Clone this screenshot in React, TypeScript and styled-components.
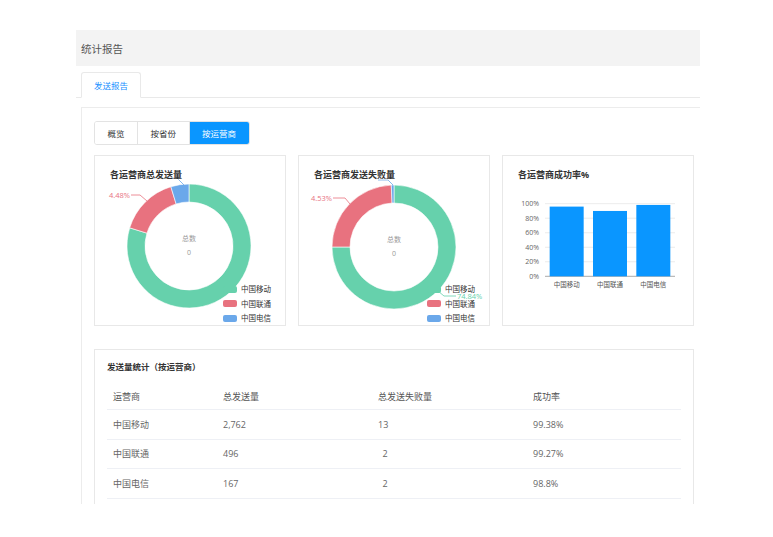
import React from "react";
import styled, { createGlobalStyle } from "styled-components";

const Global = createGlobalStyle`
  html, body { margin: 0; padding: 0; background: #fff; }
  body { font-family: "Open Sans", "Noto Sans CJK SC", sans-serif; color: #333; }
  * { box-sizing: border-box; }
`;

const GREEN = "#66d1ac";
const RED = "#e8727f";
const BLUE = "#6ba8ea";
const PRIMARY = "#0a96ff";

const Frame = styled.div`
  margin: 30px 0 0 76px;
  width: 624px;
  height: 474px;
  overflow: hidden;
`;

const PageHeader = styled.div`
  height: 36px;
  background: #f3f3f3;
  display: flex;
  align-items: center;
  padding-left: 5px;
  font-size: 10.5px;
  color: #555;
`;

const TabBar = styled.div`
  margin-top: 6px;
  height: 26px;
  border-bottom: 1px solid #e9e9e9;
  padding-left: 5px;
  display: flex;
  align-items: flex-end;
`;

const Tab = styled.div`
  width: 60px;
  height: 26px;
  margin-bottom: -1px;
  border: 1px solid #e9e9e9;
  border-bottom-color: #fff;
  border-radius: 3px 3px 0 0;
  background: #fff;
  color: #1890ff;
  font-size: 8.5px;
  display: flex;
  align-items: center;
  justify-content: center;
`;

const Panel = styled.div`
  margin: 9px 0 0 5px;
  width: 626px;
  border: 1px solid #ececec;
  padding: 12px 12px 30px;
`;

const ButtonGroup = styled.div`
  display: inline-flex;
  height: 24px;
  border: 1px solid #e3e3e3;
  border-radius: 3px;
  overflow: hidden;
`;

const Segment = styled.div<{ $active?: boolean }>`
  display: flex;
  align-items: center;
  padding: 0 12.5px;
  font-size: 8.5px;
  color: ${(p) => (p.$active ? "#fff" : "#333")};
  background: ${(p) => (p.$active ? PRIMARY : "#fff")};
  & + & { border-left: 1px solid #e3e3e3; }
`;

const ChartRow = styled.div`
  margin-top: 10px;
  display: grid;
  grid-template-columns: repeat(3, 1fr);
  gap: 12px;
`;

const Card = styled.div`
  position: relative;
  height: 171px;
  border: 1px solid #e8e8e8;
  background: #fff;
`;

const CardTitle = styled.div`
  position: relative;
  z-index: 1;
  padding: 13px 0 0 15px;
  height: 25px;
  font-size: 9px;
  line-height: 12px;
  font-weight: 700;
  color: #333;
  text-shadow: 0 0 2px #fff, 0 0 2px #fff;
`;

const ChartSvg = styled.svg`
  display: block;
  overflow: visible;
`;

const Legend = styled.div`
  position: absolute;
  left: 128px;
  top: 126px;
  display: flex;
  flex-direction: column;
`;

const LegendItem = styled.div`
  height: 14.5px;
  display: flex;
  align-items: center;
  gap: 3px;
`;

const LegendIcon = styled.span<{ $color: string }>`
  width: 14px;
  height: 7px;
  border-radius: 2px;
  background: ${(p) => p.$color};
`;

const LegendText = styled.span`
  font-size: 7.5px;
  line-height: 10px;
  color: #333;
  background: #fff;
  padding: 0 1px;
`;

const TableCard = styled.div`
  margin-top: 23px;
  border: 1px solid #e8e8e8;
  padding: 11px 12px 20px;
`;

const TableTitle = styled.div`
  font-size: 8.5px;
  line-height: 12px;
  font-weight: 700;
  color: #333;
`;

const Table = styled.div`
  margin-top: 11px;
  width: 574px;
`;

const Row = styled.div<{ $head?: boolean }>`
  display: grid;
  grid-template-columns: 110px 155px 155px 154px;
  height: ${(p) => (p.$head ? "26px" : "29.5px")};
  align-items: center;
  border-bottom: 1px solid #eef0f5;
  font-size: 9px;
  color: ${(p) => (p.$head ? "#555" : "#666")};
`;

const Cell = styled.div`
  padding-left: 6px;
  white-space: pre;
`;

type Seg = { color: string; a0: number; a1: number };

function pt(cx: number, cy: number, r: number, a: number) {
  const rad = (a * Math.PI) / 180;
  return [cx + r * Math.sin(rad), cy - r * Math.cos(rad)];
}

function arc(cx: number, cy: number, r0: number, r1: number, a0: number, a1: number) {
  const large = a1 - a0 > 180 ? 1 : 0;
  const [x1, y1] = pt(cx, cy, r1, a0);
  const [x2, y2] = pt(cx, cy, r1, a1);
  const [x3, y3] = pt(cx, cy, r0, a1);
  const [x4, y4] = pt(cx, cy, r0, a0);
  return `M${x1} ${y1} A${r1} ${r1} 0 ${large} 1 ${x2} ${y2} L${x3} ${y3} A${r0} ${r0} 0 ${large} 0 ${x4} ${y4} Z`;
}

type Label = { text: string; color: string; points: string; x: number; y: number; anchor: "start" | "end" };

const legendItems = [
  { name: "中国移动", color: GREEN },
  { name: "中国联通", color: RED },
  { name: "中国电信", color: BLUE },
];

function Donut({ title, cx, cy, segs, labels }: { title: string; cx: number; cy: number; segs: Seg[]; labels: Label[] }) {
  return (
    <Card>
      <CardTitle>{title}</CardTitle>
      <ChartSvg width={190} height={144}>
        {segs.map((s, i) => (
          <path key={i} d={arc(cx, cy, 44, 62, s.a0, s.a1)} fill={s.color} stroke="#fff" strokeWidth={0.6} />
        ))}
        {labels.map((l, i) => (
          <g key={i}>
            <polyline points={l.points} fill="none" stroke={l.color} strokeWidth={0.8} />
            {l.text && (
              <text x={l.x} y={l.y} fill={l.color} fontSize={7.5} textAnchor={l.anchor} dominantBaseline="central" fontFamily="Open Sans, sans-serif">
                {l.text}
              </text>
            )}
          </g>
        ))}
        <text x={cx} y={cy - 8} fill="#999" fontSize={7} textAnchor="middle" dominantBaseline="central" fontFamily="Noto Sans CJK SC, sans-serif">
          总数
        </text>
        <text x={cx} y={cy + 6} fill="#999" fontSize={7} textAnchor="middle" dominantBaseline="central" fontFamily="Open Sans, sans-serif">
          0
        </text>
      </ChartSvg>
      <Legend>
        {legendItems.map((it) => (
          <LegendItem key={it.name}>
            <LegendIcon $color={it.color} />
            <LegendText>{it.name}</LegendText>
          </LegendItem>
        ))}
      </Legend>
    </Card>
  );
}

const bars = [
  { name: "中国移动", value: 96 },
  { name: "中国联通", value: 90 },
  { name: "中国电信", value: 98.3 },
];

function BarChart() {
  const y0 = 95.3;
  const k = 0.726;
  const x0 = 42;
  const x1 = 172;
  const band = (x1 - x0) / 3;
  const ticks = [0, 20, 40, 60, 80, 100];
  return (
    <Card>
      <CardTitle>各运营商成功率%</CardTitle>
      <ChartSvg width={190} height={144}>
        {ticks.map((t) => (
          <g key={t}>
            <line x1={x0} x2={x1} y1={y0 - t * k} y2={y0 - t * k} stroke={t === 0 ? "#aaa" : "#e6e6e6"} strokeWidth={t === 0 ? 1 : 0.8} />
            <text x={36} y={y0 - t * k} fill="#666" fontSize={7} textAnchor="end" dominantBaseline="central" fontFamily="Open Sans, sans-serif">
              {t}%
            </text>
          </g>
        ))}
        {bars.map((b, i) => {
          const cx = x0 + band * (i + 0.5);
          const h = b.value * k;
          return (
            <g key={b.name}>
              <rect x={cx - 17} y={y0 - h} width={34} height={h} fill={PRIMARY} />
              <text x={cx} y={103} fill="#555" fontSize={6.5} textAnchor="middle" dominantBaseline="central" fontFamily="Noto Sans CJK SC, sans-serif">
                {b.name}
              </text>
            </g>
          );
        })}
      </ChartSvg>
    </Card>
  );
}

const rows = [
  { name: "中国移动", total: "2,762", fail: "13", rate: "99.38%" },
  { name: "中国联通", total: "496", fail: "\u20022", rate: "99.27%" },
  { name: "中国电信", total: "167", fail: "\u20022", rate: "98.8%" },
];

export default function App() {
  return (
    <>
      <Global />
      <Frame>
        <PageHeader>统计报告</PageHeader>
        <TabBar>
          <Tab>发送报告</Tab>
        </TabBar>
        <Panel>
          <ButtonGroup>
            <Segment>概览</Segment>
            <Segment>按省份</Segment>
            <Segment $active>按运营商</Segment>
          </ButtonGroup>
          <ChartRow>
            <Donut
              title="各运营商总发送量"
              cx={94}
              cy={65}
              segs={[
                { color: GREEN, a0: 0, a1: 287 },
                { color: RED, a0: 287, a1: 343 },
                { color: BLUE, a0: 343, a1: 360 },
              ]}
              labels={[
                { text: "4.48%", color: RED, points: "52,20 45,14 36,14", x: 35, y: 14, anchor: "end" },
                { text: "", color: BLUE, points: "89,4 82,-3 70,-3", x: 0, y: 0, anchor: "end" },
              ]}
            />
            <Donut
              title="各运营商发送失败量"
              cx={95}
              cy={66}
              segs={[
                { color: GREEN, a0: 0, a1: 270 },
                { color: RED, a0: 270, a1: 357.5 },
                { color: BLUE, a0: 357.5, a1: 360 },
              ]}
              labels={[
                { text: "4.53%", color: RED, points: "51,23 46,17 34,17", x: 33, y: 17, anchor: "end" },
                { text: "", color: BLUE, points: "94,4 89,-1 79,-1", x: 0, y: 0, anchor: "end" },
                { text: "74.84%", color: GREEN, points: "139,110 145,115 157,115", x: 158, y: 115, anchor: "start" },
              ]}
            />
            <BarChart />
          </ChartRow>
          <TableCard>
            <TableTitle>发送量统计（按运营商）</TableTitle>
            <Table>
              <Row $head>
                <Cell>运营商</Cell>
                <Cell>总发送量</Cell>
                <Cell>总发送失败量</Cell>
                <Cell>成功率</Cell>
              </Row>
              {rows.map((r) => (
                <Row key={r.name}>
                  <Cell>{r.name}</Cell>
                  <Cell>{r.total}</Cell>
                  <Cell>{r.fail}</Cell>
                  <Cell>{r.rate}</Cell>
                </Row>
              ))}
            </Table>
          </TableCard>
        </Panel>
      </Frame>
    </>
  );
}
